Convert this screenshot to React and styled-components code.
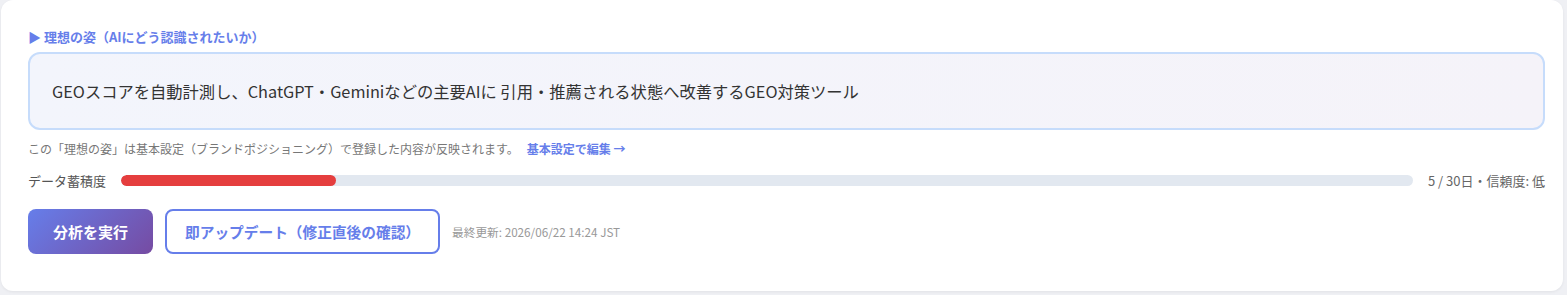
import React from 'react';
import styled, { createGlobalStyle } from 'styled-components';

const GlobalStyle = createGlobalStyle`
  html, body {
    margin: 0;
    padding: 0;
    background: #eff0f4;
    font-family: "Noto Sans CJK JP", "Noto Sans", sans-serif;
  }
`;

const stats = { days: 5, target: 30, trust: '低' };

const App = () => {
  const ratio = (stats.days / stats.target) * 100;
  return (
    <>
      <GlobalStyle />
      <Page>
        <Card>
          <Label>▶ 理想の姿（AIにどう認識されたいか）</Label>
          <IdealBox>
            GEOスコアを自動計測し、ChatGPT・Geminiなどの主要AIに 引用・推薦される状態へ改善するGEO対策ツール
          </IdealBox>
          <Note>
            この「理想の姿」は基本設定（ブランドポジショニング）で登録した内容が反映されます。
            <EditLink href="#">基本設定で編集 →</EditLink>
          </Note>
          <ProgressRow>
            <ProgressLabel>データ蓄積度</ProgressLabel>
            <Track>
              <Fill style={{ width: `${ratio}%` }} />
            </Track>
            <ProgressInfo>
              {stats.days} / {stats.target}日・信頼度: {stats.trust}
            </ProgressInfo>
          </ProgressRow>
          <Actions>
            <PrimaryButton>分析を実行</PrimaryButton>
            <OutlineButton>即アップデート（修正直後の確認）</OutlineButton>
            <Updated>最終更新: 2026/06/22 14:24 JST</Updated>
          </Actions>
        </Card>
      </Page>
    </>
  );
};

const Page = styled.div`
  width: 1567px;
  height: 295px;
  padding: 0 4px 4px 1px;
  box-sizing: border-box;
`;

const Card = styled.div`
  height: 100%;
  box-sizing: border-box;
  background: #fff;
  border-radius: 12px;
  box-shadow: 0 1px 3px rgba(0, 0, 0, 0.06);
  padding: 28px 18px 0 27px;
  display: flex;
  flex-direction: column;
`;

const Label = styled.div`
  color: #667eea;
  font-size: 13px;
  font-weight: 700;
  line-height: 18px;
  margin-bottom: 6px;
`;

const IdealBox = styled.div`
  border: 2px solid #c6dcfb;
  border-radius: 12px;
  background: linear-gradient(90deg, #f3f5fc, #f5f3f9);
  padding: 0 22px;
  height: 78px;
  box-sizing: border-box;
  display: flex;
  align-items: center;
  font-size: 16.3px;
  color: #333;
`;

const Note = styled.div`
  margin-top: 11px;
  font-size: 12px;
  line-height: 16px;
  color: #777;
`;

const EditLink = styled.a`
  color: #667eea;
  font-weight: 700;
  text-decoration: none;
  margin-left: 8px;
`;

const ProgressRow = styled.div`
  display: flex;
  align-items: center;
  gap: 15px;
  margin-top: 13px;
  height: 20px;
`;

const ProgressLabel = styled.span`
  font-size: 13px;
  color: #555;
`;

const Track = styled.div`
  flex: 1;
  height: 11px;
  border-radius: 6px;
  background: #e2e8f0;
  overflow: hidden;
`;

const Fill = styled.div`
  height: 100%;
  border-radius: 6px;
  background: #e53e3e;
`;

const ProgressInfo = styled.span`
  font-size: 13px;
  color: #666;
`;

const Actions = styled.div`
  display: flex;
  align-items: center;
  gap: 12px;
  margin-top: 19px;
`;

const PrimaryButton = styled.button`
  height: 45px;
  padding: 0 25px;
  border: none;
  border-radius: 8px;
  background: linear-gradient(135deg, #667eea, #764ba2);
  color: #fff;
  font-family: inherit;
  font-size: 15px;
  font-weight: 700;
`;

const OutlineButton = styled.button`
  height: 45px;
  padding: 0 18px;
  border: 2px solid #667eea;
  border-radius: 8px;
  background: #fff;
  color: #667eea;
  font-family: inherit;
  font-size: 14.7px;
  font-weight: 700;
`;

const Updated = styled.span`
  font-size: 11.7px;
  color: #999;
`;

export default App;
